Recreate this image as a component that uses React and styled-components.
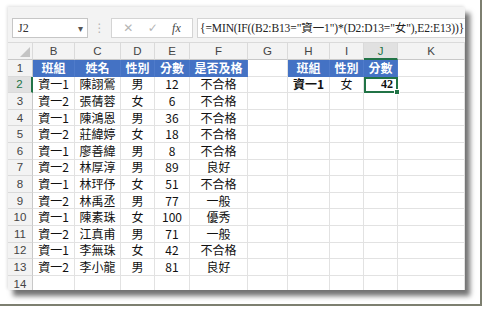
import React from 'react'
import styled, { createGlobalStyle } from 'styled-components'

const GlobalStyle = createGlobalStyle`
  html, body { margin: 0; padding: 0; background: #fff; }
  body { font-family: "Noto Sans CJK TC", "Liberation Sans", sans-serif; }
`

const COLS = ['B', 'C', 'D', 'E', 'F', 'G', 'H', 'I', 'J', 'K']
const WIDTHS = '25px 42px 46px 34px 35px 58px 40px 42px 34px 34px 67px'

const TABLE = [
  ['資一1', '陳詡鶯', '男', '12', '不合格'],
  ['資一2', '張蒨蓉', '女', '6', '不合格'],
  ['資一1', '陳鴻恩', '男', '36', '不合格'],
  ['資一2', '莊緯婷', '女', '18', '不合格'],
  ['資一1', '廖善緯', '男', '8', '不合格'],
  ['資一2', '林厚淳', '男', '89', '良好'],
  ['資一1', '林玶伃', '女', '51', '不合格'],
  ['資一2', '林禹丞', '男', '77', '一般'],
  ['資一1', '陳素珠', '女', '100', '優秀'],
  ['資一2', '江真甫', '男', '71', '一般'],
  ['資一1', '李無珠', '女', '42', '不合格'],
  ['資一2', '李小龍', '男', '81', '良好'],
]

function buildRow(r) {
  if (r === 1) {
    return [
      { t: '班組', head: true }, { t: '姓名', head: true }, { t: '性別', head: true },
      { t: '分數', head: true }, { t: '是否及格', head: true }, {},
      { t: '班組', head: true }, { t: '性別', head: true }, { t: '分數', head: true }, {},
    ]
  }
  const d = TABLE[r - 2]
  const left = d ? d.map((t) => ({ t })) : [{}, {}, {}, {}, {}]
  const right = r === 2
    ? [{ t: '資一1', serif: true }, { t: '女' }, { t: '42', selected: true }]
    : [{}, {}, {}]
  return [...left, {}, ...right, {}]
}

export default function App() {
  const rows = Array.from({ length: 14 }, (_, i) => i + 1)
  return (
    <>
      <GlobalStyle />
      <Canvas>
        <Panel>
          <Toolbar>
            <NameBox>
              <span>J2</span>
              <Caret>▾</Caret>
            </NameBox>
            <Grip>⋮</Grip>
            <FuncBox>
              <FuncBtn>✕</FuncBtn>
              <FuncBtn>✓</FuncBtn>
              <Fx>fx</Fx>
            </FuncBox>
            <FormulaBox>{'{=MIN(IF((B2:B13="資一1")*(D2:D13="女"),E2:E13))}'}</FormulaBox>
          </Toolbar>
          <Sheet>
            <Corner>
              <svg width="10" height="10" viewBox="0 0 10 10">
                <polygon points="10,0 10,10 0,10" fill="#c4c4c4" />
              </svg>
            </Corner>
            {COLS.map((c) => (
              <ColHead key={c} $active={c === 'J'}>{c}</ColHead>
            ))}
            {rows.map((r) => (
              <React.Fragment key={r}>
                <RowHead $active={r === 2}>{r}</RowHead>
                {buildRow(r).map((cell, i) => (
                  <Cell
                    key={i}
                    $head={cell.head}
                    $serif={cell.serif}
                    $selected={cell.selected}
                  >
                    {cell.t}
                    {cell.selected && <Handle />}
                  </Cell>
                ))}
              </React.Fragment>
            ))}
          </Sheet>
        </Panel>
      </Canvas>
    </>
  )
}

const Canvas = styled.div`
  width: 482px;
  height: 306px;
  padding: 7px 0 0 8px;
  box-sizing: border-box;
  border-right: 2px solid #7d7f70;
  border-bottom: 2px solid #7d7f70;
  background: #fff;
  overflow: hidden;
`

const Panel = styled.div`
  width: 457px;
  height: 283px;
  background: #f3f3f3;
  display: flex;
  flex-direction: column;
  overflow: hidden;
  box-shadow: 5px 6px 5px rgba(0, 0, 0, 0.55), -1px -1px 3px rgba(0, 0, 0, 0.12);
`

const Toolbar = styled.div`
  height: 36px;
  flex: none;
  display: flex;
  align-items: flex-start;
  padding: 11px 0 0 4px;
  box-sizing: border-box;
  border-bottom: 1px solid #dadada;
`

const NameBox = styled.div`
  width: 76px;
  height: 20px;
  box-sizing: border-box;
  background: #fff;
  border: 1px solid #c6c6c6;
  display: flex;
  align-items: center;
  justify-content: space-between;
  padding: 0 4px 0 5px;
  font-family: "Liberation Serif", serif;
  font-size: 12px;
  color: #333;
`

const Caret = styled.span`
  font-size: 10px;
  color: #555;
  font-family: "DejaVu Sans", sans-serif;
`

const Grip = styled.div`
  width: 23px;
  text-align: center;
  color: #b4b4b4;
  font-size: 12px;
  line-height: 20px;
  font-family: "DejaVu Sans", sans-serif;
`

const FuncBox = styled.div`
  width: 82px;
  height: 20px;
  box-sizing: border-box;
  background: #fff;
  border: 1px solid #d4d4d4;
  display: flex;
  align-items: center;
  justify-content: space-around;
  padding: 0 4px;
`

const FuncBtn = styled.span`
  color: #b5b5b5;
  font-size: 12px;
  font-family: "DejaVu Sans", sans-serif;
`

const Fx = styled.span`
  color: #444;
  font-size: 12px;
  font-style: italic;
  font-family: "Liberation Serif", serif;
`

const FormulaBox = styled.div`
  flex: 1;
  margin-left: 4px;
  height: 20px;
  box-sizing: border-box;
  background: #fff;
  border: 1px solid #d4d4d4;
  border-right: none;
  padding-left: 2px;
  font-family: "Liberation Serif", "Noto Sans CJK TC", serif;
  font-size: 11.5px;
  letter-spacing: -0.1px;
  line-height: 18px;
  color: #222;
  white-space: nowrap;
`

const Sheet = styled.div`
  flex: 1;
  display: grid;
  grid-template-columns: ${WIDTHS};
  grid-template-rows: 17px;
  grid-auto-rows: 16.6px;
  background: #fff;
  overflow: hidden;
`

const Corner = styled.div`
  background: #f3f3f3;
  border-right: 1px solid #dadada;
  border-bottom: 1px solid #c8c8c8;
  display: flex;
  align-items: flex-end;
  justify-content: flex-end;
  padding: 0 2px 2px 0;
`

const ColHead = styled.div`
  background: ${(p) => (p.$active ? '#e1e1e1' : '#f3f3f3')};
  color: ${(p) => (p.$active ? '#217346' : '#444')};
  border-right: 1px solid #dadada;
  border-bottom: ${(p) => (p.$active ? '2px solid #217346' : '1px solid #c8c8c8')};
  box-sizing: border-box;
  font-size: 11.5px;
  display: flex;
  align-items: center;
  justify-content: center;
  font-family: "Liberation Sans", sans-serif;
`

const RowHead = styled.div`
  background: ${(p) => (p.$active ? '#e1e1e1' : '#f3f3f3')};
  color: ${(p) => (p.$active ? '#217346' : '#444')};
  border-right: ${(p) => (p.$active ? '2px solid #217346' : '1px solid #c8c8c8')};
  border-bottom: 1px solid #dadada;
  box-sizing: border-box;
  font-size: 11.5px;
  display: flex;
  align-items: center;
  justify-content: center;
  font-family: "Liberation Sans", sans-serif;
`

const Cell = styled.div`
  position: relative;
  box-sizing: border-box;
  background: ${(p) => (p.$head ? '#4472c4' : '#fff')};
  color: ${(p) => (p.$head ? '#fff' : '#111')};
  border-right: 1px solid ${(p) => (p.$head ? '#4f7bca' : '#e2e2e2')};
  border-bottom: 1px solid ${(p) => (p.$head ? '#4472c4' : '#e2e2e2')};
  ${(p) => p.$selected && 'outline: 2px solid #217346; outline-offset: -2px; z-index: 1;'}
  font-size: 12px;
  font-weight: ${(p) => (p.$head || p.$selected || p.$serif ? 700 : 400)};
  font-family: ${(p) => (p.$selected ? '"Liberation Serif", serif' : '"Noto Sans CJK TC", sans-serif')};
  display: flex;
  align-items: center;
  justify-content: ${(p) => (p.$selected ? 'flex-end' : 'center')};
  padding-right: ${(p) => (p.$selected ? '4px' : '0')};
  white-space: nowrap;
  line-height: 1;
`

const Handle = styled.span`
  position: absolute;
  right: -3px;
  bottom: -3px;
  width: 6px;
  height: 6px;
  background: #217346;
  border: 1px solid #fff;
  box-sizing: border-box;
  z-index: 2;
`
